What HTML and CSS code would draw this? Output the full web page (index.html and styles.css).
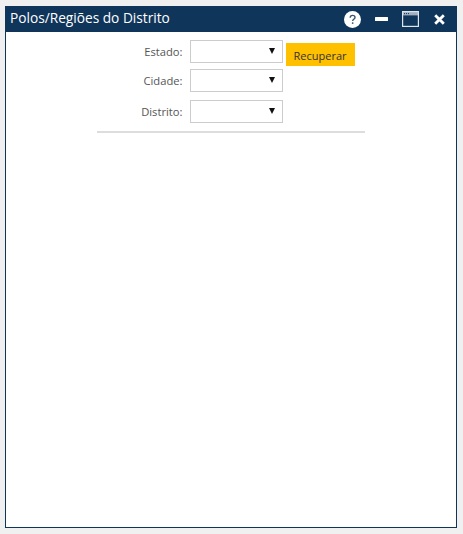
FILE: index.html

```html
<!DOCTYPE html>
<html lang="pt">
<head>
<meta charset="UTF-8" />
<title>Polos/Regiões do Distrito</title>
<link rel="stylesheet" href="styles.css">
</head>
<body>
  <div class="janela">
    <div class="titulo">
      <span class="titulo-texto">Polos/Regiões do Distrito</span>
      <div class="titulo-botoes">
        <svg class="ico-ajuda" width="17" height="17" viewBox="0 0 17 17">
          <circle cx="8.5" cy="8.5" r="8.5" fill="#fff"/>
          <path d="M6.2 6.7c0-1.4 1-2.3 2.4-2.3s2.4.8 2.4 2c0 1.8-2.3 1.8-2.3 3.5" fill="none" stroke="#3d566f" stroke-width="1.4"/>
          <rect x="7.9" y="11.3" width="1.5" height="1.6" fill="#3d566f"/>
        </svg>
        <svg class="ico-min" width="13" height="4" viewBox="0 0 13 4">
          <rect width="13" height="4" rx="0.5" fill="#fff"/>
        </svg>
        <svg class="ico-max" width="17" height="16" viewBox="0 0 17 16">
          <rect x="0.6" y="0.6" width="15.8" height="14.8" fill="none" stroke="#dfe4e9" stroke-width="1.2"/>
          <rect x="1" y="1" width="15" height="3.4" fill="#dfe4e9" opacity="0.7"/>
          <path d="M2 2.6h1M4 2.6h1M6 2.6h1" stroke="#10355a" stroke-width="1"/>
        </svg>
        <svg class="ico-fechar" width="11" height="11" viewBox="0 0 11 11">
          <path d="M1.2 1.2l8.6 8.6M9.8 1.2l-8.6 8.6" stroke="#fff" stroke-width="2.8"/>
        </svg>
      </div>
    </div>

    <div class="conteudo">
      <div class="form">
        <div class="linha linha-estado">
          <label>Estado:</label>
          <div class="combo"><span class="seta"></span></div>
          <button class="btn-recuperar">Recuperar</button>
        </div>
        <div class="linha linha-cidade">
          <label>Cidade:</label>
          <div class="combo"><span class="seta"></span></div>
        </div>
        <div class="linha linha-distrito">
          <label>Distrito:</label>
          <div class="combo"><span class="seta"></span></div>
        </div>
        <div class="divisor"></div>
      </div>
    </div>
  </div>
</body>
</html>
```

FILE: styles.css

```css
html, body {
  margin: 0;
  padding: 0;
  height: 100%;
  background: #f0f0f0;
  font-family: "Open Sans", Arial, sans-serif;
  color: #555;
}
body {
  padding: 6px 6px 6px 5px;
  box-sizing: border-box;
}
.janela {
  height: 522px;
  box-sizing: border-box;
  background: #fff;
  border: 1px solid #10355a;
  border-top: none;
  display: flex;
  flex-direction: column;
}
.titulo {
  height: 26px;
  flex: none;
  background: #10355a;
  color: #fff;
  display: flex;
  align-items: center;
  justify-content: space-between;
  padding: 0 12px 0 4px;
  margin: 0 -1px;
}
.titulo-texto {
  font-size: 13.7px;
  line-height: 24px;
  margin: -2px 0 0 1px;
}
.titulo-botoes {
  display: flex;
  align-items: center;
}
.ico-ajuda { margin-right: 14px; }
.ico-min { margin-right: 14px; }
.ico-max { margin-right: 15px; }
.conteudo {
  display: flex;
  justify-content: center;
  padding: 8px 0 0 0;
}
.form {
  width: 268px;
  margin-left: -1px;
}
.linha {
  display: flex;
  align-items: flex-start;
  height: 23px;
}
.linha-cidade { margin-top: 6px; }
.linha-distrito { margin-top: 8px; }
.linha label {
  width: 86px;
  text-align: right;
  font-size: 11.2px;
  line-height: 23px;
  margin-right: 7px;
}
.combo {
  width: 93px;
  height: 23px;
  box-sizing: border-box;
  border: 1px solid #ccc;
  background: #fff;
  position: relative;
}
.seta {
  position: absolute;
  right: 7px;
  top: 7px;
  width: 0;
  height: 0;
  border-left: 3px solid transparent;
  border-right: 3px solid transparent;
  border-top: 6px solid #111;
}
.btn-recuperar {
  width: 69px;
  height: 23px;
  margin: 3px 0 0 3px;
  padding: 1px 0 0;
  border: none;
  background: #ffc000;
  color: #333;
  font-family: inherit;
  font-size: 11px;
}
.divisor {
  height: 2px;
  background: #ddd;
  margin-top: 8px;
}
```
